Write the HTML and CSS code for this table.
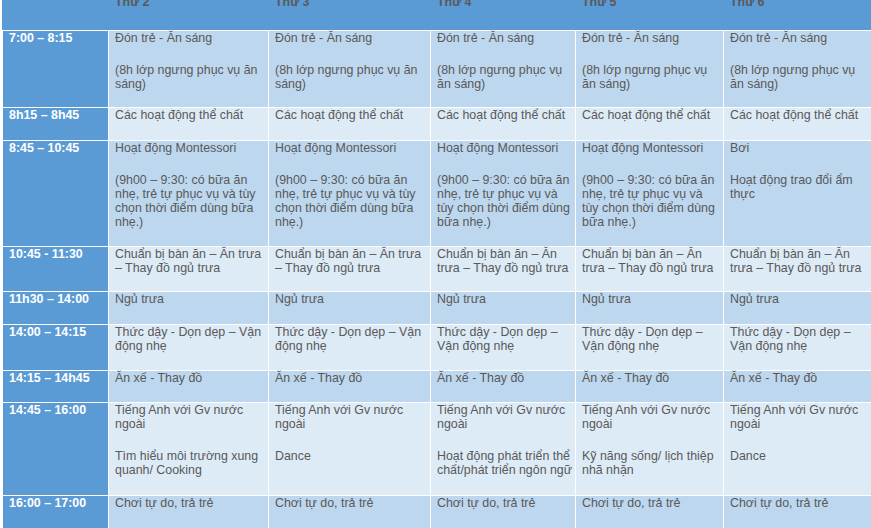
FILE: index.html
```html
<!DOCTYPE html>
<html lang="vi">
<head>
<meta charset="utf-8">
<title>Thời khóa biểu</title>
<link rel="stylesheet" href="styles.css">
</head>
<body>
<table class="schedule">
  <colgroup>
    <col class="c-time">
    <col class="c-d2">
    <col class="c-d3">
    <col class="c-d4">
    <col class="c-d5">
    <col class="c-d6">
  </colgroup>
  <thead>
    <tr class="head">
      <th></th>
      <th>Thứ 2</th>
      <th>Thứ 3</th>
      <th>Thứ 4</th>
      <th>Thứ 5</th>
      <th>Thứ 6</th>
    </tr>
  </thead>
  <tbody>
    <tr class="dark r-arrival">
      <td class="time">7:00 – 8:15</td>
      <td><p>Đón trẻ - Ăn sáng</p><p>(8h lớp ngưng phục vụ ăn sáng)</p></td>
      <td><p>Đón trẻ - Ăn sáng</p><p>(8h lớp ngưng phục vụ ăn sáng)</p></td>
      <td><p>Đón trẻ - Ăn sáng</p><p>(8h lớp ngưng phục vụ ăn sáng)</p></td>
      <td><p>Đón trẻ - Ăn sáng</p><p>(8h lớp ngưng phục vụ ăn sáng)</p></td>
      <td><p>Đón trẻ - Ăn sáng</p><p>(8h lớp ngưng phục vụ ăn sáng)</p></td>
    </tr>
    <tr class="light r-short">
      <td class="time">8h15 – 8h45</td>
      <td><p>Các hoạt động thể chất</p></td>
      <td><p>Các hoạt động thể chất</p></td>
      <td><p>Các hoạt động thể chất</p></td>
      <td><p>Các hoạt động thể chất</p></td>
      <td><p>Các hoạt động thể chất</p></td>
    </tr>
    <tr class="dark r-montessori">
      <td class="time">8:45 – 10:45</td>
      <td><p>Hoạt động Montessori</p><p>(9h00 – 9:30: có bữa ăn nhẹ, trẻ tự phục vụ và tùy chọn thời điểm dùng bữa nhẹ.)</p></td>
      <td><p>Hoạt động Montessori</p><p>(9h00 – 9:30: có bữa ăn nhẹ, trẻ tự phục vụ và tùy chọn thời điểm dùng bữa nhẹ.)</p></td>
      <td><p>Hoạt động Montessori</p><p>(9h00 – 9:30: có bữa ăn nhẹ, trẻ tự phục vụ và tùy chọn thời điểm dùng bữa nhẹ.)</p></td>
      <td><p>Hoạt động Montessori</p><p>(9h00 – 9:30: có bữa ăn nhẹ, trẻ tự phục vụ và tùy chọn thời điểm dùng bữa nhẹ.)</p></td>
      <td><p>Bơi</p><p>Hoạt động trao đổi ẩm thực</p></td>
    </tr>
    <tr class="light r-two">
      <td class="time">10:45 - 11:30</td>
      <td><p>Chuẩn bị bàn ăn – Ăn trưa – Thay đồ ngủ trưa</p></td>
      <td><p>Chuẩn bị bàn ăn – Ăn trưa – Thay đồ ngủ trưa</p></td>
      <td><p>Chuẩn bị bàn ăn – Ăn trưa – Thay đồ ngủ trưa</p></td>
      <td><p>Chuẩn bị bàn ăn – Ăn trưa – Thay đồ ngủ trưa</p></td>
      <td><p>Chuẩn bị bàn ăn – Ăn trưa – Thay đồ ngủ trưa</p></td>
    </tr>
    <tr class="dark r-short">
      <td class="time">11h30 – 14:00</td>
      <td><p>Ngủ trưa</p></td>
      <td><p>Ngủ trưa</p></td>
      <td><p>Ngủ trưa</p></td>
      <td><p>Ngủ trưa</p></td>
      <td><p>Ngủ trưa</p></td>
    </tr>
    <tr class="light r-two-wide">
      <td class="time">14:00 – 14:15</td>
      <td><p>Thức dậy - Dọn dẹp – Vận động nhẹ</p></td>
      <td><p>Thức dậy - Dọn dẹp – Vận động nhẹ</p></td>
      <td><p>Thức dậy - Dọn dẹp – Vận động nhẹ</p></td>
      <td><p>Thức dậy - Dọn dẹp – Vận động nhẹ</p></td>
      <td><p>Thức dậy - Dọn dẹp – Vận động nhẹ</p></td>
    </tr>
    <tr class="dark r-snack">
      <td class="time">14:15 – 14h45</td>
      <td><p>Ăn xế - Thay đồ</p></td>
      <td><p>Ăn xế - Thay đồ</p></td>
      <td><p>Ăn xế - Thay đồ</p></td>
      <td><p>Ăn xế - Thay đồ</p></td>
      <td><p>Ăn xế - Thay đồ</p></td>
    </tr>
    <tr class="light r-afternoon">
      <td class="time">14:45 – 16:00</td>
      <td><p>Tiếng Anh với Gv nước ngoài</p><p>Tìm hiểu môi trường xung quanh/ Cooking</p></td>
      <td><p>Tiếng Anh với Gv nước ngoài</p><p>Dance</p></td>
      <td><p>Tiếng Anh với Gv nước ngoài</p><p>Hoạt động phát triển thể chất/phát triển ngôn ngữ</p></td>
      <td><p>Tiếng Anh với Gv nước ngoài</p><p>Kỹ năng sống/ lịch thiệp nhã nhặn</p></td>
      <td><p>Tiếng Anh với Gv nước ngoài</p><p>Dance</p></td>
    </tr>
    <tr class="dark r-short">
      <td class="time">16:00 – 17:00</td>
      <td><p>Chơi tự do, trả trẻ</p></td>
      <td><p>Chơi tự do, trả trẻ</p></td>
      <td><p>Chơi tự do, trả trẻ</p></td>
      <td><p>Chơi tự do, trả trẻ</p></td>
      <td><p>Chơi tự do, trả trẻ</p></td>
    </tr>
  </tbody>
</table>
</body>
</html>
```
FILE: styles.css
```css
html {
  overflow: hidden;
  background: #ffffff;
}

body {
  margin: 0;
  padding: 0 0 0 2px;
  font-family: "Liberation Sans", Arial, sans-serif;
  font-size: 12.4px;
  line-height: 14px;
  color: #595959;
}

.schedule {
  border-collapse: collapse;
  table-layout: fixed;
  width: 879px;
  margin-top: -6px;
}

.c-time { width: 106px; }
.c-d2 { width: 160px; }
.c-d3 { width: 162px; }
.c-d4 { width: 145px; }
.c-d5 { width: 148px; }
.c-d6 { width: 158px; }

.schedule th,
.schedule td {
  border: 1px solid #ffffff;
  padding: 0 2px 0 6px;
  text-align: left;
  vertical-align: top;
}

/* last column runs past the visible edge; keep its wrap width */
.schedule td:last-child {
  padding-right: 11px;
}

.schedule th {
  background: #5b9bd5;
  border-left-color: #5b9bd5;
  border-right-color: #5b9bd5;
  border-top-color: #5b9bd5;
  font-weight: bold;
  color: #595959;
}

.head { height: 36px; }
.r-arrival { height: 77px; }
.r-short { height: 33px; }
.r-montessori { height: 106px; }
.r-two { height: 45px; }
.r-two-wide { height: 46px; }
.r-snack { height: 32px; }
.r-afternoon { height: 93px; }

.schedule p {
  margin: 0 0 18px;
}

.schedule p:last-child {
  margin-bottom: 0;
}

.dark td { background: #bdd7ee; }
.light td { background: #ddebf7; }

.schedule td.time {
  background: #5b9bd5;
  color: #ffffff;
  font-weight: bold;
}
```
